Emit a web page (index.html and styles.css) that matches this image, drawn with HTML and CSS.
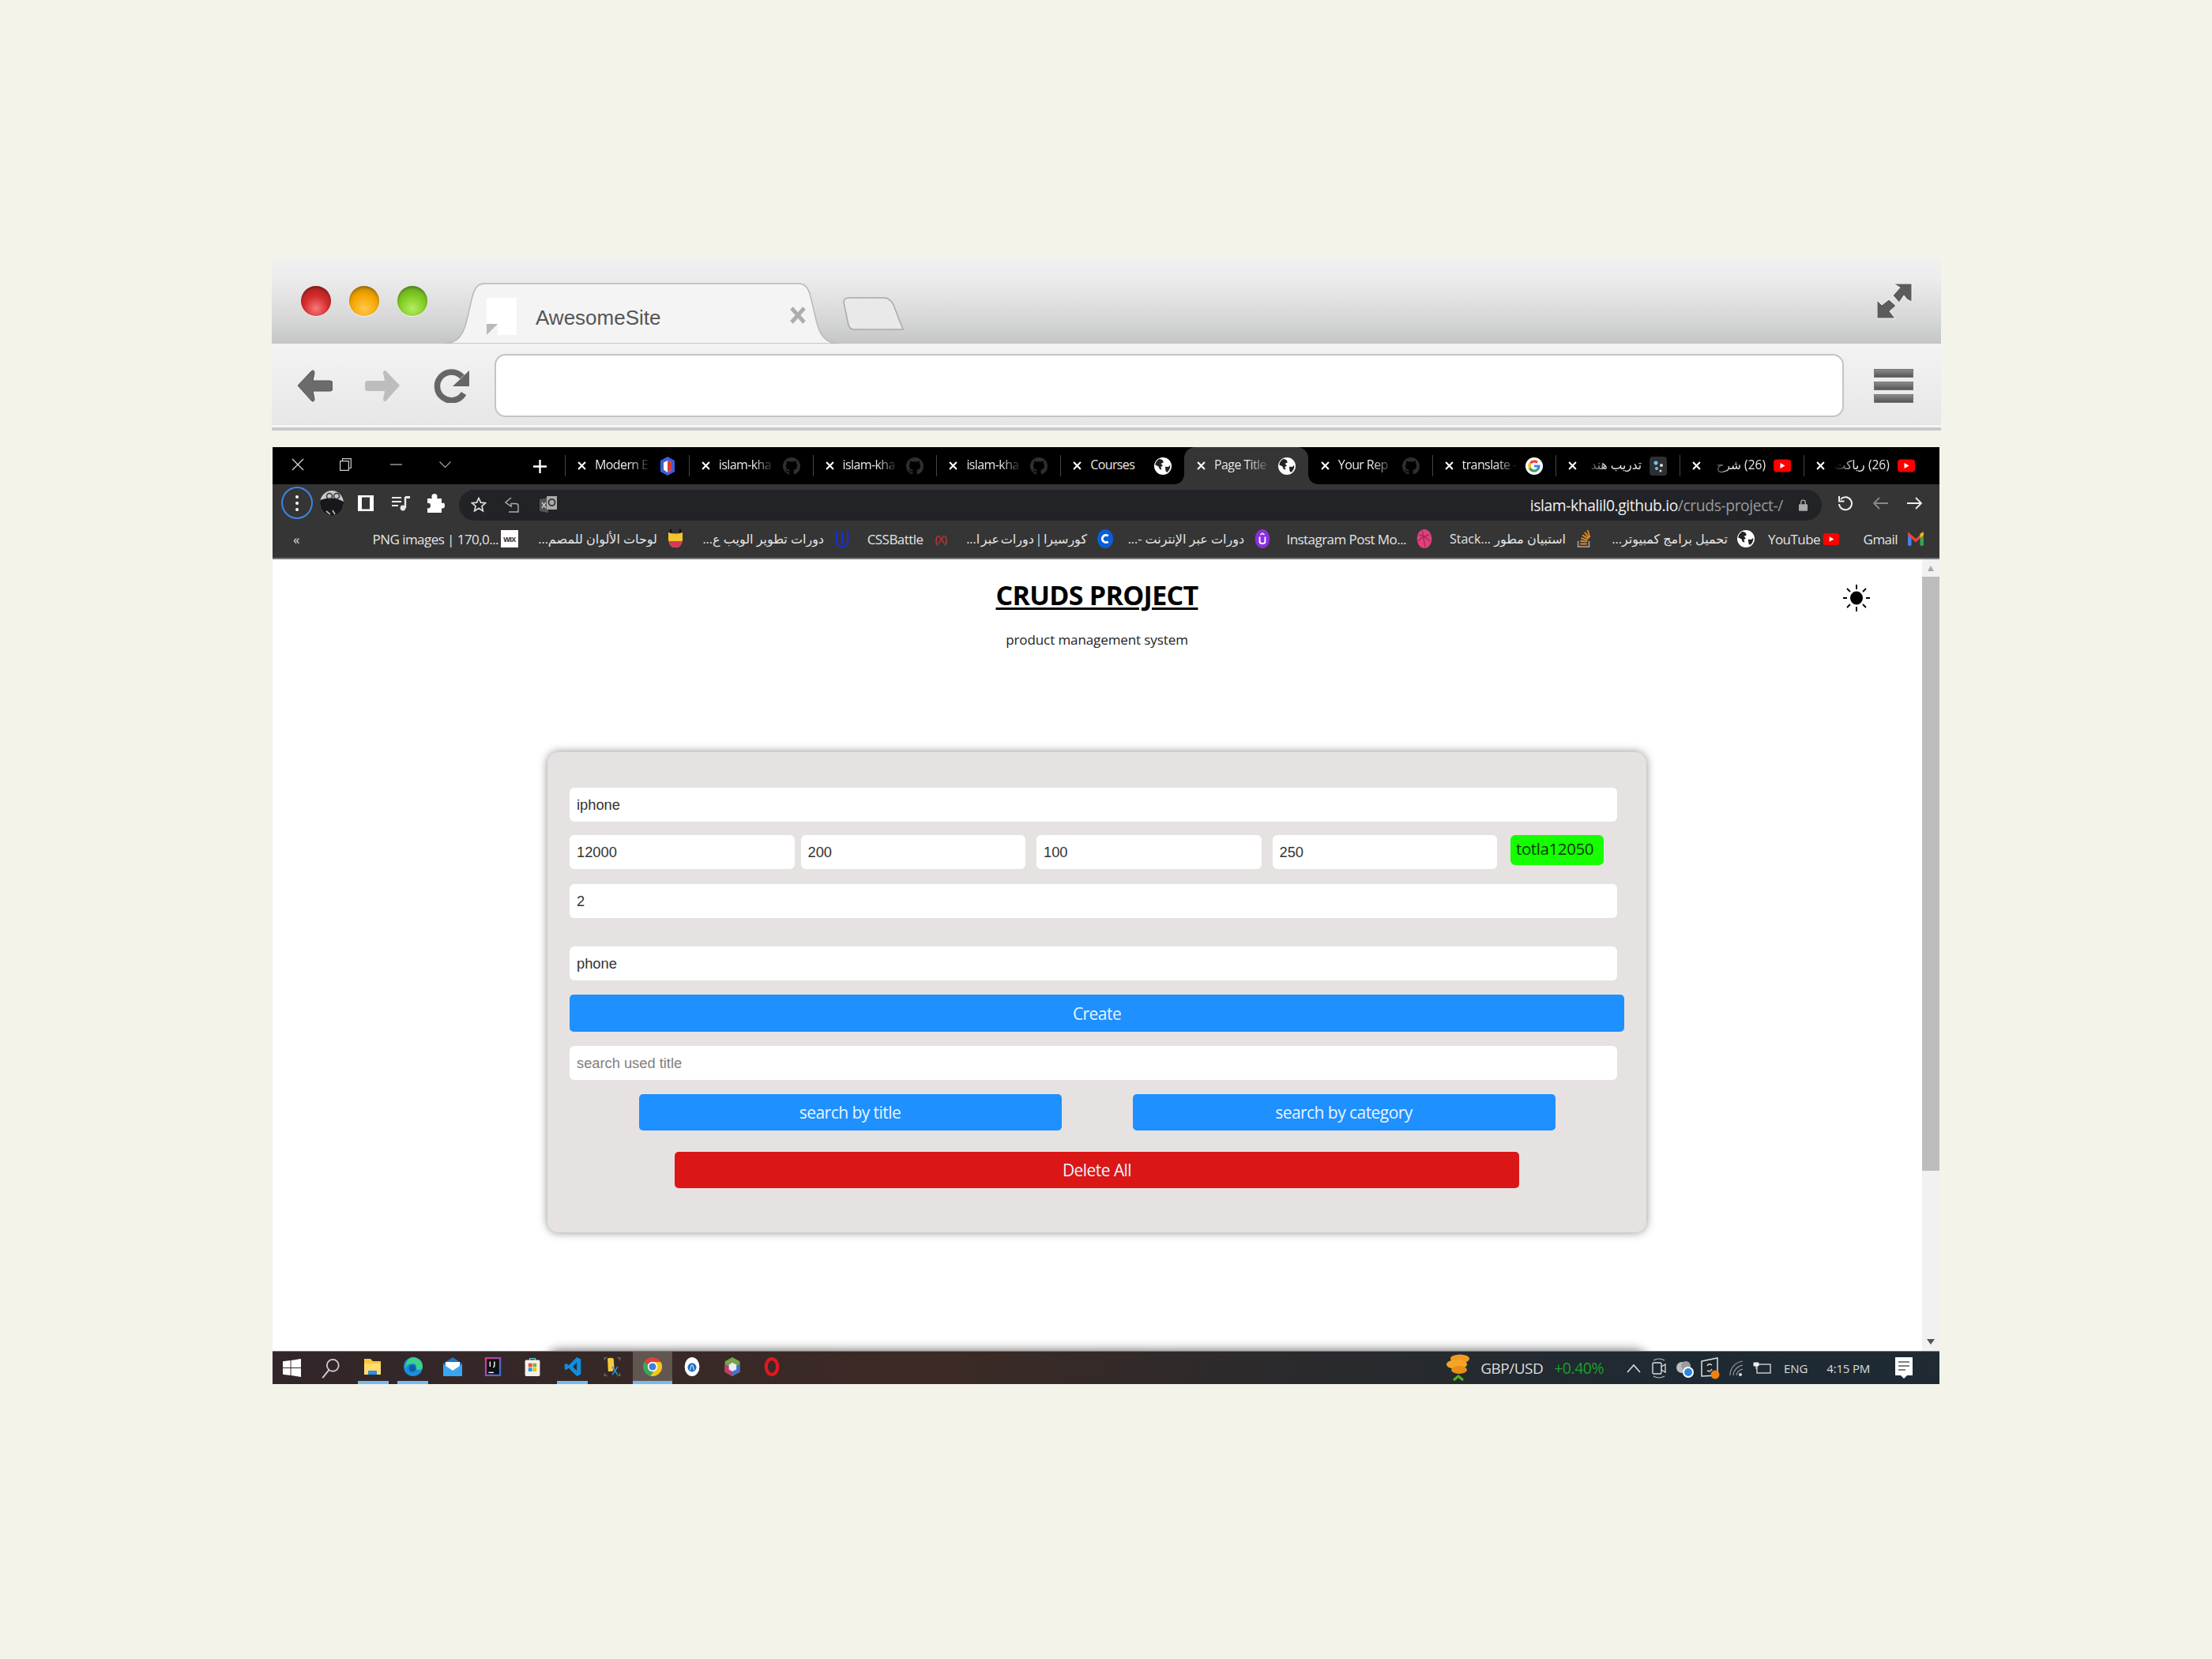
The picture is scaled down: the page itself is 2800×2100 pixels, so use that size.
FILE: index.html
```html
<!DOCTYPE html>
<html lang="en">
<head>
<meta charset="utf-8">
<title>CRUDS project screenshot</title>
<link rel="stylesheet" href="styles.css">
</head>
<body>
<svg class="defs" aria-hidden="true">
  <symbol id="x" viewBox="0 0 10 10"><path d="M1 1l8 8M9 1l-8 8" stroke="#fff" stroke-width="1.900" fill="none"/></symbol>
  <symbol id="gh" viewBox="0 0 16 16"><path fill="#2f2f2f" d="M8 0C3.58 0 0 3.58 0 8c0 3.54 2.29 6.53 5.47 7.59.4.07.55-.17.55-.38 0-.19-.01-.82-.01-1.49-2.01.37-2.53-.49-2.69-.94-.09-.23-.48-.94-.82-1.13-.28-.15-.68-.52-.01-.53.63-.01 1.08.58 1.23.82.72 1.21 1.87.87 2.33.66.07-.52.28-.87.51-1.07-1.78-.2-3.64-.89-3.64-3.95 0-.87.31-1.59.82-2.15-.08-.2-.36-1.02.08-2.12 0 0 .67-.21 2.2.82.64-.18 1.32-.27 2-.27.68 0 1.36.09 2 .27 1.53-1.04 2.2-.82 2.2-.82.44 1.1.16 1.92.08 2.12.51.56.82 1.27.82 2.15 0 3.07-1.87 3.75-3.65 3.95.29.25.54.73.54 1.48 0 1.07-.01 1.93-.01 2.2 0 .21.15.46.55.38A8.013 8.013 0 0016 8c0-4.42-3.58-8-8-8z"/></symbol>
  <symbol id="globe" viewBox="0 0 20 20"><circle cx="10" cy="10" r="10" fill="#fff"/><path fill="#222" d="M6 1.600C3.400 3 1.500 5.600 1.200 8.600l3.600 1.600 1.600 3.400 2.200.6-1-3.200 2.400-1.400-2.200-2.400 3-1.600L9.600 3zM12.600 10.600l3.600.2 2.200-2c.4 3-1 6.400-3.600 8.400l-1.600-1.600z"/></symbol>
  <symbol id="yt" viewBox="0 0 22 16"><rect width="22" height="16" rx="4" fill="#f00"/><path d="M8.500 4.500l6 3.500-6 3.500z" fill="#fff"/></symbol>
</svg>

<div class="frame">
  <section class="mock">
    <div class="mock-strip">
      <div class="lights"><i class="light red"></i><i class="light amber"></i><i class="light green"></i></div>
      <div class="mock-tab">
        <svg class="mock-tab-shape" viewBox="0 0 502 77"><path d="M0 77c16 0 24-8 29-26l8-34C40 6 44 1 52 1h398c8 0 12 5 15 16l8 34c5 18 13 26 29 26z" fill="#f4f4f4" stroke="#b8b8b8" stroke-width="1.500"/></svg>
        <span class="page-fav"><i></i></span>
        <span class="mock-tab-title">AwesomeSite</span>
        <svg class="mock-tab-close" viewBox="0 0 22 22"><path d="M3 2l16 18M19 2L3 20" stroke="#adadad" stroke-width="5" fill="none"/></svg>
      </div>
      <svg class="mock-newtab" viewBox="0 0 77 42"><path d="M1 7c0-4 2-6 6-6h45c6 0 9 3 12 9l12 31H14c-4 0-6-2-7-6z" fill="#e9e9e9" stroke="#a8a8a8" stroke-width="1.500"/></svg>
      <svg class="mock-expand" viewBox="0 0 45 46"><path fill="#5c5c5c" stroke="#f5f5f5" stroke-width="1" d="M21 1h23v23l-6-3-4-5-6 9-8-9 9-10zM0 45V22l6 6 9-7 9 8-8 7 7 9z"/></svg>
    </div>
    <div class="mock-bar">
      <svg class="mock-btn" viewBox="0 0 45 41"><path fill="#6b6b6b" stroke="#555" d="M1 20L18 2c2-2 4-1 4 2l-2 10h21c3 0 4 1 4 4v5c0 3-1 4-4 4H20l2 10c0 3-2 4-4 2z"/></svg>
      <svg class="mock-btn fwd" viewBox="0 0 45 41"><path fill="#bdbdbd" d="M44 20L27 2c-2-2-4-1-4 2l2 10H4c-3 0-4 1-4 4v5c0 3 1 4 4 4h21l-2 10c0 3 2 4 4 2z"/></svg>
      <svg class="mock-btn reload" viewBox="0 0 45 44"><path d="M36 11A18 18 0 1 0 38 32" fill="none" stroke="#666" stroke-width="7.500"/><path d="M45 3v20H24z" fill="#666"/></svg>
      <div class="mock-address"></div>
      <div class="mock-menu"><i></i><i></i><i></i></div>
    </div>
  </section>

  <section class="win">
    <div class="tabbar">
      <div class="winctl">
        <svg class="c-x" viewBox="0 0 16 16"><path d="M1 1l14 14M15 1L1 15" stroke="#ddd" stroke-width="1.200"/></svg>
        <svg class="c-r" viewBox="0 0 15 16"><path d="M.6 3.600h10.800v11.800H.6zM3.500 3.500V.7h10.800v11.800h-2.900" fill="none" stroke="#ccc" stroke-width="1.200"/></svg>
        <svg class="c-m" viewBox="0 0 15 2"><path d="M0 1h15" stroke="#bbb" stroke-width="1.200"/></svg>
        <svg class="c-d" viewBox="0 0 15 8"><path d="M.5.5l7 7 7-7" fill="none" stroke="#aaa" stroke-width="1.100"/></svg>
        <svg class="c-p" viewBox="0 0 17 17"><path d="M8.500 0v17M0 8.500h17" stroke="#fff" stroke-width="2.400"/></svg>
      </div>
      <div class="tab sep"><svg class="tx"><use href="#x"/></svg><span class="tt">Modern E</span>
        <svg class="fav" viewBox="0 0 22 24"><path d="M11 0l9 5v14l-9 5-9-5V5z" fill="#3d5fd8"/><path d="M11 5l5 2.500v9L11 20l-5-3.500v-9z" fill="#fff"/><path d="M11 5l5 2.500v9L11 20z" fill="#dd3b2f"/></svg></div>
      <div class="tab sep"><svg class="tx"><use href="#x"/></svg><span class="tt">islam-kha</span><svg class="fav"><use href="#gh"/></svg></div>
      <div class="tab sep"><svg class="tx"><use href="#x"/></svg><span class="tt">islam-kha</span><svg class="fav"><use href="#gh"/></svg></div>
      <div class="tab sep"><svg class="tx"><use href="#x"/></svg><span class="tt">islam-kha</span><svg class="fav"><use href="#gh"/></svg></div>
      <div class="tab sep"><svg class="tx"><use href="#x"/></svg><span class="tt whole">Courses</span><svg class="fav"><use href="#globe"/></svg></div>
      <div class="tab active"><svg class="tx"><use href="#x"/></svg><span class="tt">Page Title</span><svg class="fav"><use href="#globe"/></svg></div>
      <div class="tab"><svg class="tx"><use href="#x"/></svg><span class="tt">Your Rep</span><svg class="fav"><use href="#gh"/></svg></div>
      <div class="tab sep"><svg class="tx"><use href="#x"/></svg><span class="tt">translate -</span>
        <svg class="fav" viewBox="0 0 22 22"><circle cx="11" cy="11" r="11" fill="#fff"/><path d="M6.300 7.200A6 6 0 0 1 15 6.500" fill="none" stroke="#ea4335" stroke-width="3.200"/><path d="M5.500 13.500a6 6 0 0 1 .8-6.300" fill="none" stroke="#fbbc05" stroke-width="3.200"/><path d="M15.500 15a6 6 0 0 1-10-1.500" fill="none" stroke="#34a853" stroke-width="3.200"/><path d="M11 11h6c0 1.700-.6 3-1.500 4" fill="none" stroke="#4285f4" stroke-width="3.200"/></svg></div>
      <div class="tab sep"><svg class="tx"><use href="#x"/></svg><span class="tt rtl" dir="rtl">تدريب هند</span>
        <svg class="fav" viewBox="0 0 22 24"><rect width="22" height="24" rx="4" fill="#2d2f33"/><circle cx="8" cy="8" r="2.500" fill="#6cc4e8"/><circle cx="15" cy="11" r="2" fill="#ddd"/><circle cx="9" cy="15" r="2" fill="#6cc4e8"/><circle cx="14" cy="18" r="1.500" fill="#ddd"/></svg></div>
      <div class="tab sep"><svg class="tx"><use href="#x"/></svg><span class="tt rtl" dir="rtl">(26) شرح</span><svg class="fav yt"><use href="#yt"/></svg></div>
      <div class="tab sep"><svg class="tx"><use href="#x"/></svg><span class="tt rtl" dir="rtl">(26) رياكت</span><svg class="fav yt"><use href="#yt"/></svg></div>
    </div>

    <div class="navbar">
      <div class="kebab"><i></i><i></i><i></i></div>
      <svg class="av" viewBox="0 0 30 32"><defs><clipPath id="avc"><ellipse cx="15" cy="16" rx="15" ry="16"/></clipPath></defs><g clip-path="url(#avc)"><rect width="30" height="32" fill="#c9c9c9"/><path d="M0 12q15-6 30 2v18H0z" fill="#17171c"/><circle cx="12" cy="7" r="3.500" fill="none" stroke="#333" stroke-width="1.500"/><circle cx="21" cy="7" r="3.500" fill="none" stroke="#333" stroke-width="1.500"/><path d="M8 26l5 4M16 25l3 5" stroke="#aaa" stroke-width="2"/></g></svg>
      <svg class="nb side" viewBox="0 0 20 20"><path fill-rule="evenodd" fill="#fff" d="M0 0h20v20H0zM5 2.500v15h10v-15z"/></svg>
      <svg class="nb queue" viewBox="0 0 23 20"><path d="M0 3h12M0 8h12M0 13h8" stroke="#e8e8e8" stroke-width="2.200"/><path d="M17 2v14" stroke="#e8e8e8" stroke-width="2.400"/><path d="M17 1h6v3h-6z" fill="#e8e8e8"/><circle cx="14" cy="16" r="3.400" fill="#e8e8e8"/></svg>
      <svg class="nb puzzle" viewBox="0 0 22 24"><path fill="#fff" d="M0 6h6c-1-2-1-6 3-6s4 4 3 6h6v6c2-1 4-1 4 3s-3 4-4 3v6H0v-6c2 1 4 0 4-3s-2-4-4-3z"/></svg>
      <div class="omni">
        <svg class="oi" viewBox="0 0 20 20"><path d="M10 1.500l2.500 5.600 6 .6-4.500 4 1.300 6L10 14.600 4.700 17.700l1.300-6-4.500-4 6-.6z" fill="none" stroke="#ddd" stroke-width="1.700"/></svg>
        <svg class="oi share" viewBox="0 0 20 22"><path d="M8 2L1 8l7 5V9.500h6q3 0 3 3V20H5" fill="none" stroke="#aaa" stroke-width="1.500"/></svg>
        <svg class="oi trans" viewBox="0 0 22 24"><path d="M0 5l11-2v19L0 20z" fill="#555"/><path d="M9 1h13v17H9z" fill="#aaa"/><circle cx="15.500" cy="9" r="4" fill="none" stroke="#222" stroke-width="1.600"/><path d="M3 9l5 7M8 9l-5 7" stroke="#ccc" stroke-width="1.300"/></svg>
        <span class="url"><b>islam-khalil0.github.io</b>/cruds-project-/</span>
        <svg class="lock" viewBox="0 0 12 16"><path d="M3 7V4a3 3 0 0 1 6 0v3" fill="none" stroke="#aaa" stroke-width="1.500"/><rect y="6.500" width="12" height="9.500" rx="1" fill="#aaa"/></svg>
      </div>
      <svg class="nb rl" viewBox="0 0 20 20"><path d="M4 5a8 8 0 1 1-2 6" fill="none" stroke="#eee" stroke-width="2"/><path d="M2 1v6.500h6.500" fill="none" stroke="#eee" stroke-width="2"/></svg>
      <svg class="nb bk" viewBox="0 0 20 18"><path d="M20 9H2M9 2L2 9l7 7" fill="none" stroke="#888" stroke-width="1.800"/></svg>
      <svg class="nb fw" viewBox="0 0 20 18"><path d="M0 9h18M11 2l7 7-7 7" fill="none" stroke="#eee" stroke-width="1.800"/></svg>
    </div>

    <div class="bookmarks">
      <span class="chev">«</span>
      <a class="bm tight"><span>PNG images | 170,0...</span><svg class="bi" viewBox="0 0 22 22"><rect width="22" height="22" fill="#fff"/><text class="wix" x="11" y="15" text-anchor="middle">WIX</text></svg></a>
      <a class="bm"><span dir="rtl">لوحات الألوان للمصم...</span><svg class="bi" viewBox="0 0 22 24"><path d="M5 0v5M17 0v5" stroke="#111" stroke-width="2.500"/><path d="M2 4q9 3 18 0v9q-1 10-9 10T2 13z" fill="#f5c52c"/><path d="M2.300 15h17.400Q18 23 11 23T2.300 15z" fill="#d6375d"/></svg></a>
      <a class="bm"><span dir="rtl">دورات تطوير الويب ع...</span><svg class="bi" viewBox="0 0 24 30"><path d="M3 2v16q1 10 9 10t9-10V2M12 3v20" fill="none" stroke="#1c2fc7" stroke-width="3"/></svg></a>
      <a class="bm"><span>CSSBattle</span><span class="xmark">(X)</span></a>
      <a class="bm"><span class="narrow" dir="rtl">كورسيرا | دورات عبر ا...</span><svg class="bi" viewBox="0 0 22 26"><ellipse cx="11" cy="13" rx="11" ry="13" fill="#0b5ed7"/><path d="M15 9a5 5 0 1 0 0 8" fill="none" stroke="#fff" stroke-width="3.200"/></svg></a>
      <a class="bm"><span dir="rtl">دورات عبر الإنترنت -...</span><svg class="bi" viewBox="0 0 22 28"><ellipse cx="11" cy="14" rx="11" ry="14" fill="#8a2fe0"/><path d="M7 11v7q0 3 4 3t4-3v-7" fill="none" stroke="#fff" stroke-width="2.200"/><path d="M8 8l3-2 3 2" fill="none" stroke="#fff" stroke-width="1.800"/></svg></a>
      <a class="bm"><span>Instagram Post Mo...</span><svg class="bi" viewBox="0 0 22 28"><ellipse cx="11" cy="14" rx="11" ry="14" fill="#e0407f"/><path d="M3 8q10 2 16 10M8 2q2 12 4 24M1 18q8-8 17-10" fill="none" stroke="#9c2458" stroke-width="1.300"/></svg></a>
      <a class="bm"><span dir="rtl">استبيان مطور ...Stack</span><svg class="bi" viewBox="0 0 20 26"><path d="M2 16v8h15v-8" fill="none" stroke="#999" stroke-width="2"/><path d="M5 20h9M5 16l9 1M6 12l9 3M8 8l8 5M11 4l6 8M15 1l3 10" stroke="#e58a1f" stroke-width="2"/></svg></a>
      <a class="bm"><span dir="rtl">تحميل برامج كمبيوتر...</span><svg class="bi"><use href="#globe"/></svg></a>
      <a class="bm tight"><span>YouTube</span><svg class="bi yt"><use href="#yt"/></svg></a>
      <a class="bm"><span>Gmail</span><svg class="bi" viewBox="0 0 20 20"><path d="M1 3v15h4V8z" fill="#4285f4"/><path d="M15 8v10h4V3z" fill="#34a853"/><path d="M1 2l9 8 9-8v4l-9 8-9-8z" fill="#ea4335"/><path d="M15 4l4-2v4l-4 3z" fill="#fbbc05"/></svg></a>
    </div>

    <div class="viewport">
      <main class="content">
        <header class="head">
          <div></div>
          <div class="titles">
            <h1>CRUDS PROJECT</h1>
            <p>product management system</p>
          </div>
          <svg class="sun" viewBox="0 0 36 36"><ellipse cx="18" cy="18" rx="8" ry="8.500" fill="#000"/><path d="M18 1v6M18 29v6M1 18h5M30 18h5M6 6l4 4M30 6l-4 4M6 30l4-4M30 30l-4-4" stroke="#000" stroke-width="1.800"/></svg>
        </header>

        <section class="card">
          <input class="field" value="iphone">
          <div class="price-row">
            <input class="field num" value="12000">
            <input class="field num gap-s" value="200">
            <input class="field num gap-m" value="100">
            <input class="field num gap-m" value="250">
            <small class="total">totla12050</small>
          </div>
          <input class="field count" value="2">
          <input class="field cat" value="phone">
          <button class="btn create">Create</button>
          <input class="field srch" placeholder="search used title">
          <div class="search-row">
            <button class="btn half">search by title</button>
            <button class="btn half">search by category</button>
          </div>
          <button class="btn danger">Delete All</button>
        </section>

        <section class="card next"></section>
      </main>
      <div class="scrollbar">
        <i class="arrow up"></i>
        <div class="thumb"></div>
        <i class="arrow down"></i>
      </div>
    </div>

    <footer class="taskbar">
      <svg class="ti win-logo" viewBox="0 0 24 24"><path fill="#fff" d="M0 3.500l10-1.500v9.500H0zM11 2l13-2v11.500H11zM0 12.500h10V22L0 20.500zM11 12.500h13V24l-13-2z"/></svg>
      <svg class="ti find" viewBox="0 0 24 28"><circle cx="15" cy="10" r="8" fill="none" stroke="#ccc" stroke-width="2"/><path d="M10 16L1 27" stroke="#ccc" stroke-width="2.200"/></svg>
      <span class="cell on"><svg viewBox="0 0 22 24"><path d="M0 2h8l3 3h10v17H0z" fill="#f7c83d"/><path d="M0 8h21v14H0z" fill="#ffdc6b"/><path d="M5 17h11v5H5z" fill="#2d8fe0"/></svg></span>
      <span class="cell on"><svg viewBox="0 0 24 24"><circle cx="12" cy="12" r="12" fill="#1b8fd8"/><path d="M12 0a12 12 0 0 1 12 12q0 4-5 4-4 0-3-3 1-5-5-5-7 0-9 6Q3 1 12 0z" fill="#3fd08a"/><circle cx="11" cy="14" r="4.500" fill="#0c5fa8"/></svg></span>
      <span class="cell"><svg viewBox="0 0 24 24"><path d="M0 8l12-8 12 8v16H0z" fill="#1976c8"/><path d="M0 9l12 8 12-8v15H0z" fill="#3aa6ef"/><path d="M3 6h18v5l-9 6-9-6z" fill="#fff"/></svg></span>
      <span class="cell"><svg viewBox="0 0 22 26"><defs><linearGradient id="ij" x1="0" y1="0" x2="1" y2="1"><stop offset="0" stop-color="#f0308a"/><stop offset="1" stop-color="#1e78e6"/></linearGradient></defs><rect width="22" height="26" fill="url(#ij)"/><rect x="2.500" y="2.500" width="17" height="21" fill="#111"/><path d="M5 21h7" stroke="#fff" stroke-width="1.500"/><path d="M7 6v7M13 6v6q0 1.500-2 1.500" fill="none" stroke="#fff" stroke-width="1.500"/></svg></span>
      <span class="cell"><svg viewBox="0 0 22 28"><path d="M7 6V2h8v4" fill="none" stroke="#6cc" stroke-width="1.500"/><rect y="4" width="22" height="24" rx="2" fill="#f3f0ea"/><path d="M5 9h5.500v5.500H5z" fill="#e8502e"/><path d="M11.500 9H17v5.500h-5.500z" fill="#7cb82f"/><path d="M5 15.500h5.500V21H5z" fill="#18a0e8"/><path d="M11.500 15.500H17V21h-5.500z" fill="#fbbc05"/></svg></span>
      <span class="cell on"><svg viewBox="0 0 24 28"><path d="M18 0l6 3v22l-6 3L6 16l-4 3-2-2v-6l2-2 4 3zM18 8l-6 6 6 6z" fill="#0f8fe0"/></svg></span>
      <span class="cell"><svg viewBox="0 0 24 28"><path d="M5 2q4-2 9 0l1 15-3 4H6z" fill="#f5c93a"/><path d="M1 0h4M1 0v4M23 0h-4M23 0v4M1 28h4M1 28v-4M23 28h-4M23 28v-4" stroke="#4a9a32" stroke-width="1.800"/><path d="M12 14l8 12M20 14l-8 12" stroke="#2b8fd8" stroke-width="1.800"/></svg></span>
      <span class="cell cur"><svg viewBox="0 0 24 24"><circle cx="12" cy="12" r="12" fill="#e0403a"/><path d="M12 12L1.600 6A12 12 0 0 0 9.500 23.700L14 17z" fill="#3aa757"/><path d="M12 6h10.400A12 12 0 0 1 9.500 23.700L17 12z" fill="#f5c518"/><circle cx="12" cy="12" r="6.200" fill="#fff"/><circle cx="12" cy="12" r="4.600" fill="#3d7fe0"/></svg></span>
      <span class="cell"><svg viewBox="0 0 22 28"><ellipse cx="11" cy="14" rx="11" ry="14" fill="#fff"/><circle cx="11" cy="15" r="6.500" fill="#1f6fc8"/><path d="M8 19l2-7h2l2 7" fill="none" stroke="#cfe6ff" stroke-width="1.300"/></svg></span>
      <span class="cell"><svg viewBox="0 0 22 28"><path d="M11 0l11 6v16l-11 6L0 22V6z" fill="#7ba34a"/><path d="M0 10l11 6v12L0 22z" fill="#c03d6b"/><path d="M22 10l-11 6v12l11-6z" fill="#3f74c9"/><path d="M11 8l6 3v7l-6 3-5-3v-7z" fill="#e8edf7"/></svg></span>
      <span class="cell"><svg viewBox="0 0 22 28"><ellipse cx="11" cy="14" rx="8.500" ry="11.500" fill="none" stroke="#e1181f" stroke-width="5"/></svg></span>

      <div class="tray">
        <svg class="coin" viewBox="0 0 32 36"><ellipse cx="18" cy="6" rx="12" ry="5.500" fill="#f29a1f"/><ellipse cx="14" cy="13" rx="13" ry="6" fill="#f4a526"/><ellipse cx="17" cy="20" rx="10" ry="5" fill="#e98f17"/><path d="M10 33l6-5 6 5" fill="none" stroke="#56b21a" stroke-width="3.200"/></svg>
        <span class="pair">GBP/USD</span>
        <span class="chg">+0.40%</span>
        <svg class="t-ic up-c" viewBox="0 0 18 12"><path d="M1 11l8-9 8 9" fill="none" stroke="#ddd" stroke-width="1.600"/></svg>
        <svg class="t-ic cam" viewBox="0 0 18 28"><path d="M2 4q7-4 14 0M2 24q7 4 14 0" fill="none" stroke="#bbb" stroke-width="1.200"/><rect x="1" y="7" width="11" height="14" rx="1.500" fill="none" stroke="#ddd" stroke-width="1.400"/><path d="M12 12l5-3v10l-5-3" fill="none" stroke="#ddd" stroke-width="1.300"/></svg>
        <svg class="t-ic cld" viewBox="0 0 24 24"><circle cx="9" cy="11" r="7" fill="#bdbdbd"/><circle cx="14" cy="9" r="6" fill="#9c9c9c"/><circle cx="17" cy="17" r="7" fill="#fff"/><circle cx="17" cy="17" r="5" fill="#2a87e0"/></svg>
        <svg class="t-ic scr" viewBox="0 0 24 28"><path d="M1 5l20-4v22L1 24z" fill="#1d262d" stroke="#ddd" stroke-width="1.500"/><path d="M14 10q-4-3-6 1M8 17q4 2 6-2" fill="none" stroke="#ddd" stroke-width="1.500"/><circle cx="18" cy="22" r="5.500" fill="#f0820f"/></svg>
        <svg class="t-ic wifi" viewBox="0 0 20 22"><path d="M2 20A18 18 0 0 1 18 2M6 20A14 14 0 0 1 18 7M10 20A10 10 0 0 1 18 12" fill="none" stroke="#999" stroke-width="1.200"/><circle cx="15" cy="19" r="2" fill="#ddd"/></svg>
        <svg class="t-ic plug" viewBox="0 0 24 18"><rect x="5" y="4" width="17" height="11" fill="none" stroke="#ddd" stroke-width="1.300"/><path d="M1 2h6v4H1zM4 6v4" fill="#eee" stroke="#eee"/></svg>
        <span class="eng">ENG</span>
        <span class="clock">4:15 PM</span>
        <svg class="t-ic note" viewBox="0 0 22 28"><path d="M0 0h22v23h-7l-4 4-4-4H0z" fill="#fff"/><path d="M4 6h14M4 11h14M4 16h9" stroke="#555" stroke-width="1.500"/></svg>
      </div>
    </footer>
  </section>
</div>
</body>
</html>
```

FILE: styles.css
```css
* { box-sizing: border-box; }
html, body { margin: 0; height: 100%; }
body {
  background: #f3f3ea;
  font-family: "Open Sans", "DejaVu Sans", sans-serif;
  overflow: hidden;
}
.defs { width: 0; height: 0; display: block; }
.frame { width: 2113px; margin: 325px 0 0 344px; }

/* mock browser */
.mock { height: 220px; }
.mock-strip {
  height: 110px;
  display: flex;
  align-items: flex-start;
  background: linear-gradient(#f1f1f1, #ececec 25%, #d8d8d8 70%, #c4c6c6);
  border-radius: 10px 10px 0 0;
}
.lights { display: flex; gap: 23px; margin: 37px 0 0 37px; }
.light { width: 38px; height: 38px; border-radius: 50%; display: block; box-shadow: inset 0 2px 3px rgba(0, 0, 0, .25), 0 1px 1px rgba(255, 255, 255, .7); }
.red { background: radial-gradient(circle at 50% 75%, #f47a7a, #d62c2c 45%, #8e1c1c 100%); }
.amber { background: radial-gradient(circle at 50% 75%, #ffc94a, #f5a500 50%, #a67a10 100%); }
.green { background: radial-gradient(circle at 50% 75%, #b4ec62, #7ecb1e 50%, #5a8f2a 100%); }
.mock-tab {
  position: relative;
  width: 502px;
  height: 77px;
  margin: 33px 0 0 20px;
  padding: 19px 0 0 55px;
  display: flex;
  align-items: flex-start;
}
.mock-tab-shape { position: absolute; inset: 0; width: 100%; height: 100%; }
.page-fav {
  position: relative;
  width: 38px;
  height: 47px;
  background: #fff;
}
.page-fav i {
  position: absolute;
  left: 0;
  bottom: 0;
  border-style: solid;
  border-width: 0 0 14px 14px;
  border-color: transparent transparent #f4f4f4 #b9b9b9;
}
.mock-tab-title {
  position: relative;
  margin: 7px 0 0 24px;
  font: 26px/36px "Liberation Sans", sans-serif;
  color: #555;
}
.mock-tab-close { position: relative; width: 22px; height: 22px; margin: 11px 42px 0 auto; }
.mock-newtab { width: 77px; height: 42px; margin: 51px 0 0 4px; }
.mock-expand { width: 45px; height: 46px; margin: 33px 36px 0 auto; }
.mock-bar {
  height: 110px;
  display: flex;
  align-items: center;
  padding: 0 0 0 32px;
  background: linear-gradient(#f3f3f3, #e6e6e6);
  border-bottom: 4px solid #c9c9c9;
  box-shadow: inset 0 -3px 0 #f7f7f7;
}
.mock-btn { width: 45px; height: 41px; flex: none; }
.fwd { margin-left: 41px; }
.reload { margin-left: 42px; height: 44px; }
.mock-address {
  width: 1708px;
  height: 80px;
  margin-left: 32px;
  background: #fff;
  border: 2px solid #c4c4c4;
  border-radius: 14px;
}
.mock-menu { width: 50px; margin-left: 38px; display: flex; flex-direction: column; gap: 5px; }
.mock-menu i { height: 11px; background: linear-gradient(#8a8a8a, #555); border: 1px solid #777; display: block; }

/* dark window */
.win { width: 2110px; margin: 21px 0 0 1px; }
.tabbar { height: 47px; background: #000; display: flex; align-items: stretch; color: #e8e8e8; }
.winctl { width: 370px; display: flex; align-items: center; padding-bottom: 4px; flex: none; }
.winctl svg { flex: none; }
.c-x { width: 16px; height: 16px; margin-left: 24px; }
.c-r { width: 15px; height: 16px; margin-left: 45px; }
.c-m { width: 15px; height: 2px; margin-left: 49px; }
.c-d { width: 15px; height: 8px; margin-left: 47px; }
.c-p { width: 17px; height: 17px; margin-left: 104px; margin-top: 6px; }
.tab {
  width: 156.800px;
  flex: none;
  display: flex;
  align-items: center;
  padding: 0 16px 0 16px;
  font-size: 16px;
  letter-spacing: -.6px;
  position: relative;
}
.sep {
  background: linear-gradient(#444, #444) left center / 1px 27px no-repeat;
}
.tx { width: 11px; height: 11px; flex: none; }
.tt {
  flex: 1;
  min-width: 0;
  margin: -3px 10px 0 11px;
  white-space: nowrap;
  -webkit-mask-image: linear-gradient(90deg, #000 62%, transparent 100%);
  mask-image: linear-gradient(90deg, #000 62%, transparent 100%);
}
.tt.whole { -webkit-mask-image: none; mask-image: none; }
.tt.rtl {
  letter-spacing: 0;
  font-size: 15.500px;
  -webkit-mask-image: linear-gradient(270deg, #000 62%, transparent 100%);
  mask-image: linear-gradient(270deg, #000 62%, transparent 100%);
}
.fav { width: 22px; height: 24px; flex: none; }
.fav.yt { height: 17px; }
.active { background: #353535; border-radius: 14px 14px 0 0; }
.active::before, .active::after {
  content: "";
  position: absolute;
  bottom: 0;
  width: 12px;
  height: 12px;
}
.active::before { left: -12px; background: radial-gradient(circle at 0 0, transparent 11.500px, #353535 12px); }
.active::after { right: -12px; background: radial-gradient(circle at 100% 0, transparent 11.500px, #353535 12px); }

.navbar {
  height: 47px;
  background: #353535;
  display: flex;
  align-items: center;
  color: #eee;
}
.kebab {
  width: 40px;
  height: 41px;
  margin: 0 0 0 11px;
  border: 2.500px solid #3d86e8;
  border-radius: 50%;
  display: flex;
  flex-direction: column;
  align-items: center;
  justify-content: center;
  gap: 4px;
  flex: none;
}
.kebab i { width: 4px; height: 4px; border-radius: 50%; background: #fff; display: block; }
.av { width: 30px; height: 32px; margin-left: 9px; flex: none; }
.nb { flex: none; }
.side { width: 20px; height: 20px; margin-left: 18px; }
.queue { width: 23px; height: 20px; margin-left: 23px; }
.puzzle { width: 22px; height: 24px; margin-left: 22px; }
.omni {
  width: 1725px;
  height: 39px;
  margin-left: 18px;
  background: #222327;
  border-radius: 20px;
  display: flex;
  align-items: center;
  padding: 0 18px 0 15px;
  flex: none;
  margin-top: 5px;
}
.oi { width: 20px; height: 20px; flex: none; }
.share { margin-left: 23px; height: 22px; }
.trans { margin-left: 24px; width: 22px; height: 24px; }
.url {
  margin-left: auto;
  font-size: 19.300px;
  letter-spacing: -.4px;
  color: #9a9a9a;
  white-space: nowrap;
}
.url b { font-weight: 400; color: #f0f0f0; }
.lock { width: 11px; height: 15px; margin-left: 20px; flex: none; }
.rl { width: 20px; height: 20px; margin-left: 20px; }
.bk { width: 20px; height: 18px; margin-left: 24px; }
.fw { width: 20px; height: 18px; margin-left: 24px; }

.bookmarks {
  height: 48px;
  background: #353535;
  border-bottom: 2px solid #777;
  display: grid;
  grid-template-columns: 103px 187px 189px 190px 100px 191px 178px 184px 181px 184px 87px 86px;
  column-gap: 21px;
  align-items: center;
  color: #e4e4e4;
  font-size: 17px;
  letter-spacing: -.55px;
  padding-bottom: 2px;
}
.chev { padding-left: 26px; font-size: 17px; color: #ddd; }
.bm {
  display: flex;
  align-items: center;
  justify-content: flex-end;
  gap: 12px;
  white-space: nowrap;
}
.bm.tight { gap: 3px; }
.bm span[dir="rtl"] { font-size: 16px; letter-spacing: 0; }
.bm span.narrow { word-spacing: -2.500px; }
.bi { width: 22px; height: 24px; flex: none; }
.bi.yt { height: 15px; }
.wix { font: 700 9px "Liberation Sans", sans-serif; fill: #222; letter-spacing: -.5px; }
.xmark { color: #d13434; font-size: 15px; letter-spacing: -1px; margin-left: 3px; }

/* page */
.viewport { height: 1003px; background: #fff; display: flex; overflow: hidden; }
.content { flex: 1; min-width: 0; overflow: hidden; padding-right: 1px; display: flex; flex-direction: column; align-items: center; }
.head {
  width: 100%;
  display: grid;
  grid-template-columns: 1fr auto 1fr;
  padding-top: 23px;
}
.titles { text-align: center; }
h1 {
  margin: 0;
  font-size: 34px;
  line-height: 44px;
  font-weight: 700;
  color: #000;
  letter-spacing: -.7px;
  text-decoration: underline;
  text-decoration-thickness: 3px;
  text-underline-offset: 3px;
}
.titles p {
  margin: 23px 0 0;
  font-size: 17px;
  line-height: 24px;
  letter-spacing: -.1px;
  color: #222;
}
.sun { width: 36px; height: 36px; justify-self: end; margin: 8px 64px 0 0; }
.card {
  width: 1391px;
  flex: none;
  margin-top: 130px;
  padding: 45px 28px 56px;
  background: #e7e2e2;
  border-radius: 14px;
  box-shadow: 0 0 12px rgba(0, 0, 0, .45);
  display: flex;
  flex-direction: column;
  align-items: flex-start;
}
.card.next { margin-top: 150px; height: 300px; box-shadow: 0 0 14px rgba(0, 0, 0, .65); }
.field {
  display: block;
  width: 1326px;
  height: 43px;
  padding: 1px 9px 0;
  border: 0;
  border-radius: 6px;
  background: #fff;
  font: 18.300px "Liberation Sans", sans-serif;
  color: #333;
}
.field::placeholder { color: #808080; }
.price-row { display: flex; align-items: flex-start; margin-top: 17px; }
.num { width: 284.500px; flex: none; }
.gap-s { margin-left: 8px; }
.gap-m { margin-left: 14px; }
.total {
  width: 118px;
  height: 38px;
  margin-left: 17px;
  padding-left: 7px;
  background: #15ff00;
  border-radius: 6px;
  font-size: 20.500px;
  line-height: 34px;
  letter-spacing: -.4px;
  white-space: nowrap;
  color: #0a3a0a;
}
.count { margin-top: 19px; }
.cat { margin-top: 36px; }
.btn {
  display: block;
  border: 0;
  border-radius: 5px;
  background: #1e90ff;
  color: #eaf4ff;
  font-family: "Open Sans", sans-serif;
  font-size: 21px;
  letter-spacing: -.55px;
}
.create { width: 100%; height: 47px; margin-top: 18px; }
.srch { margin-top: 18px; }
.search-row { width: 100%; display: flex; justify-content: center; gap: 90px; margin-top: 18px; }
.half { width: 535px; height: 46px; }
.danger { width: 1069px; height: 46px; margin: 27px auto 0; background: #db1616; }

.scrollbar {
  width: 22px;
  flex: none;
  background: #f1f1f1;
  display: flex;
  flex-direction: column;
  align-items: center;
}
.thumb { width: 100%; height: 752px; margin-top: 7px; background: #bdbdbd; }
.arrow { width: 0; height: 0; border-style: solid; display: block; }
.arrow.up { margin-top: 8px; border-width: 0 4px 7px; border-color: transparent transparent #a8a8a8; }
.arrow.down { margin-top: auto; margin-bottom: 9px; border-width: 7px 5px 0; border-color: #555 transparent transparent; }

/* taskbar */
.taskbar {
  height: 42px;
  margin-top: -1px;
  position: relative;
  display: flex;
  align-items: stretch;
  background: linear-gradient(90deg, #32262a, #3c2a25 40%, #2a2a2d 62%, #1e2a33 85%, #1f2a33);
  border-top: 1px solid #777;
  color: #ddd;
}
.ti { align-self: center; flex: none; }
.win-logo { width: 23px; height: 23px; margin-left: 13px; }
.find { width: 23px; height: 26px; margin-left: 26px; margin-right: 17px; }
.cell {
  width: 50.500px;
  flex: none;
  display: flex;
  align-items: center;
  justify-content: center;
  padding-bottom: 3px;
}
.cell svg { height: 24px; width: 24px; }
.on { background: linear-gradient(#76b9ed, #76b9ed) center bottom / 39px 4px no-repeat; }
.cur { background: #625750; box-shadow: inset 0 -4px 0 #76b9ed; }
.tray { margin-left: auto; display: flex; align-items: center; padding-right: 34px; white-space: nowrap; }
.coin { width: 32px; height: 36px; }
.pair { margin-left: 12px; font-size: 19px; letter-spacing: -.5px; }
.chg { margin-left: 14px; font-size: 19.500px; letter-spacing: -.5px; color: #17a02a; }
.t-ic { flex: none; }
.up-c { width: 18px; height: 12px; margin-left: 29px; }
.cam { width: 18px; height: 28px; margin-left: 14px; }
.cld { width: 24px; height: 24px; margin-left: 11px; }
.scr { width: 24px; height: 28px; margin-left: 9px; }
.wifi { width: 20px; height: 22px; margin-left: 11px; }
.plug { width: 24px; height: 18px; margin-left: 11px; }
.eng { margin-left: 15px; font-size: 15px; letter-spacing: -.1px; }
.clock { margin-left: 24px; font-size: 15px; letter-spacing: -.2px; }
.note { width: 22px; height: 28px; margin-left: 32px; }
```
